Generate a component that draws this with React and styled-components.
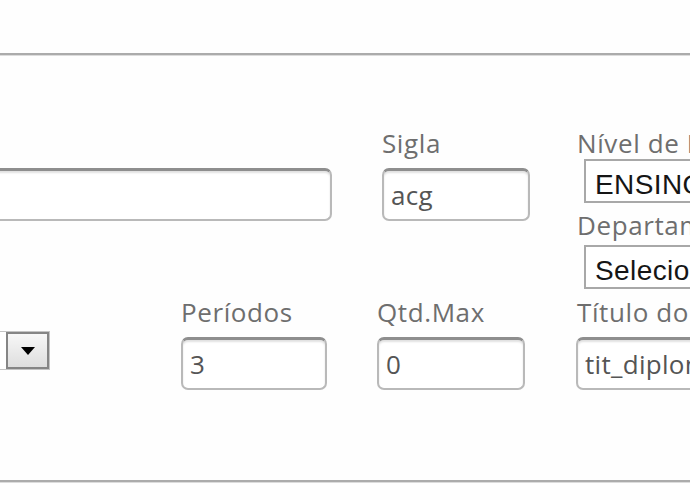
import React from 'react';
import styled, { createGlobalStyle } from 'styled-components';

const Global = createGlobalStyle`
  html, body { margin: 0; padding: 0; background: #fefefe; }
  body { font-family: "Open Sans", "DejaVu Sans", sans-serif; }
`;

const Page = styled.div`
  width: 690px;
  height: 500px;
  overflow: hidden;
  display: flex;
  flex-direction: column;
  background: #fefefe;
`;

const Rule = styled.div`
  flex: none;
  height: 2px;
  background: #ababab;
  border-bottom: 1px solid #dcdcdc;
  margin-top: ${(p) => p.$top || 0}px;
  margin-bottom: ${(p) => p.$bottom || 0}px;
`;

const Form = styled.div`
  flex: 1;
  padding-top: 72px;
  margin-left: -40px;
  display: flex;
  flex-direction: column;
`;

const Row = styled.div`
  display: flex;
  align-items: flex-start;
  margin-top: ${(p) => p.$gap || 0}px;
`;

const Cell = styled.div`
  flex: none;
  width: ${(p) => (p.$w ? `${p.$w}px` : 'auto')};
  display: flex;
  flex-direction: column;
  align-items: flex-start;
`;

const Label = styled.div`
  font: 26px/30px "Open Sans", "DejaVu Sans", sans-serif;
  letter-spacing: 0.6px;
  color: #6e6e6e;
  white-space: nowrap;
  margin-top: ${(p) => p.$gap || 0}px;
`;

const TextInput = styled.input`
  box-sizing: border-box;
  width: ${(p) => p.$w}px;
  height: 53px;
  margin: 10px 0 0 ${(p) => p.$shift || 0}px;
  padding: 0 7px;
  border: 2px solid #b9b9b9;
  border-top: 3px solid #8e8e8e;
  border-radius: 7px;
  box-shadow: inset 0 2px 2px rgba(0, 0, 0, 0.12);
  background: #fff;
  font: 26px "Open Sans", "DejaVu Sans", sans-serif;
  letter-spacing: 0.3px;
  color: #555;
  outline: none;
`;

const SelectBox = styled.div`
  box-sizing: border-box;
  width: 320px;
  height: 44px;
  margin: ${(p) => p.$gap || 0}px 0 0 7px;
  padding: 10px 0 0 9px;
  border: 2px solid #a8a8a8;
  background: #fff;
  font: 28px/28px "Liberation Sans", Arial, sans-serif;
  letter-spacing: 0.4px;
  color: #151515;
  white-space: nowrap;
  overflow: hidden;
`;

const MiniSelect = styled.div`
  box-sizing: border-box;
  width: 90px;
  height: 39px;
  margin-top: 34px;
  border: 1px solid #c4c4c4;
  background: #fff;
  display: flex;
  justify-content: flex-end;
`;

const DropButton = styled.div`
  box-sizing: border-box;
  width: 43px;
  height: 100%;
  border: 2px solid #858585;
  background: linear-gradient(#f7f7f7, #dedede);
  display: flex;
  align-items: center;
  justify-content: center;
`;

export default function App() {
  return (
    <Page>
      <Global />
      <Rule $top={53} />
      <Form>
        <Row>
          <Cell $w={422}>
            <Label>&nbsp;</Label>
            <TextInput $w={372} defaultValue="" readOnly />
          </Cell>
          <Cell $w={195}>
            <Label>Sigla</Label>
            <TextInput $w={148} defaultValue="acg" readOnly />
          </Cell>
          <Cell>
            <Label>Nível de Ensino</Label>
            <SelectBox $gap={1}>ENSINO SUPERIOR</SelectBox>
            <Label $gap={7}>Departamento</Label>
            <SelectBox $gap={5}>Selecione...</SelectBox>
          </Cell>
        </Row>
        <Row $gap={8}>
          <Cell $w={221}>
            <MiniSelect>
              <DropButton>
                <svg width="14" height="8" viewBox="0 0 14 8">
                  <path d="M0 0 H14 L7 8 Z" fill="#000" />
                </svg>
              </DropButton>
            </MiniSelect>
          </Cell>
          <Cell $w={196}>
            <Label>Períodos</Label>
            <TextInput $w={146} defaultValue="3" readOnly />
          </Cell>
          <Cell $w={200}>
            <Label>Qtd.Max</Label>
            <TextInput $w={148} defaultValue="0" readOnly />
          </Cell>
          <Cell>
            <Label>Título do Diploma</Label>
            <TextInput $w={300} $shift={-1} defaultValue="tit_diploma" readOnly />
          </Cell>
        </Row>
      </Form>
      <Rule $bottom={17} />
    </Page>
  );
}
